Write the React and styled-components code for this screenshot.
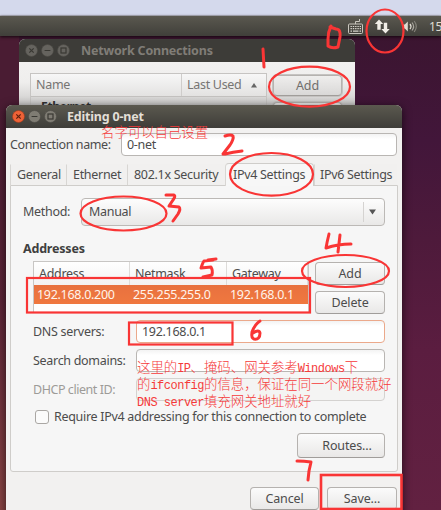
import React from "react";
import styled, { createGlobalStyle } from "styled-components";

const Global = createGlobalStyle`
  * { box-sizing: border-box; }
  html, body { margin: 0; padding: 0; overflow: hidden; }
  body { font-family: "Noto Sans", "Open Sans", sans-serif; font-size: 12.5px; color: #4c4c4c; letter-spacing: -0.3px; }
`;

const Desktop = styled.main`
  position: relative;
  width: 441px;
  height: 510px;
  overflow: hidden;
  background:
    linear-gradient(180deg, #4a1c33 0, #4a1c33 100px, #5c2437 300px, #8a4544 510px) 0 0 / 19px 100% no-repeat,
    linear-gradient(180deg, #3b1530 36px, #42163a 140px, #4e1a3b 240px, #5b1d40 350px, #622141 510px);
`;
const HostStrip = styled.div`
  height: 16px;
  background: #d4d9ec;
  border-bottom: 1px solid #b9bcc6;
`;
const Panel = styled.header`
  height: 20px;
  display: flex;
  align-items: center;
  padding-left: 348px;
  background: linear-gradient(#5a584f, #403f3a);
  box-shadow: 0 1px 3px #16060f;
  color: #dfdbd2;
  white-space: nowrap;
  svg { flex: none; }
`;
const Clock = styled.span`
  margin-left: 11px;
  font-size: 12px;
`;

const Window = styled.section`
  position: absolute;
  left: ${(p) => p.$x}px;
  top: ${(p) => p.$y}px;
  width: ${(p) => p.$w}px;
  height: ${(p) => p.$h}px;
  display: flex;
  flex-direction: column;
  border-radius: 6px 6px 0 0;
  overflow: hidden;
  background: #f2f1f0;
`;
const Shadow = styled.div`
  position: absolute;
  left: 6px;
  top: 105px;
  width: 396px;
  height: 420px;
  border-radius: 6px;
  box-shadow: 0 2px 10px rgba(0, 0, 0, 0.65);
`;
const TitleBar = styled.div`
  flex: none;
  height: 23px;
  display: flex;
  align-items: center;
  gap: 3px;
  padding-left: 6px;
  background: ${(p) => (p.$active ? "linear-gradient(#5b594f, #3e3d39)" : "#3d3c38")};
  color: ${(p) => (p.$active ? "#e3dfd7" : "#807d77")};
`;
const Title = styled.h1`
  margin: 0 0 0 ${(p) => p.$gap}px;
  font-size: 12.5px;
  line-height: 20px;
  font-weight: 700;
  letter-spacing: -0.2px;
  white-space: nowrap;
`;
const Label = styled.span`
  white-space: nowrap;
  line-height: 18px;
  letter-spacing: ${(p) => p.$ls || -0.3}px;
  width: ${(p) => (p.$w ? p.$w + "px" : "auto")};
  flex: none;
  color: ${(p) => (p.$dim ? "#9d9b98" : "inherit")};
`;

const ConnBody = styled.div`
  flex: 1;
  display: flex;
  gap: 6px;
  padding: 11px 12px 0 11px;
  background: linear-gradient(#f2f1f0 0, #efeeed 20px, #cdcccb 43px);
`;
const ConnList = styled.div`
  width: 237px;
  border: 1px solid #c6c4c2;
  border-bottom: 0;
  color: #777573;
`;
const ConnHead = styled.div`
  height: 23px;
  display: grid;
  grid-template-columns: 151px 1fr;
  background: linear-gradient(#f7f7f7, #e3e2e1);
  border-bottom: 1px solid #c3c1bf;
`;
const HeadCell = styled.div`
  display: flex;
  align-items: center;
  justify-content: space-between;
  padding: 0 ${(p) => p.$r || 0}px 0 5px;
  border-right: ${(p) => (p.$last ? 0 : 1)}px solid #cfcdcb;
`;
const ConnRow = styled.div`
  padding: 0 10px;
  height: 14px;
  color: #333;
  font-weight: 700;
  font-size: 12px;
  line-height: 20px;
`;
const ConnButtons = styled.div`
  display: flex;
  flex-direction: column;
  gap: 6px;
  padding-top: 2px;
`;

const Button = styled.button`
  flex: none;
  width: ${(p) => p.$w || 70}px;
  height: ${(p) => p.$h || 23}px;
  padding: 0 0 0 ${(p) => p.$shift || 0}px;
  border: 1px solid #b5b2af;
  border-bottom-color: #a09d9a;
  border-radius: 4px;
  background: ${(p) => (p.$dull ? "linear-gradient(#efeeed, #d9d8d7)" : "linear-gradient(#fbfbfb, #e9e8e7)")};
  box-shadow: ${(p) => (p.$dull ? "0 0 0 1px #c5c3c1" : "none")};
  font: inherit;
  letter-spacing: -0.15px;
  line-height: 18px;
  color: ${(p) => (p.$dull ? "#706e6c" : "#4c4c4c")};
`;
const Field = styled.div`
  flex: 1;
  height: 23px;
  display: flex;
  align-items: center;
  padding-left: 5px;
  border: 1px solid ${(p) => (p.$focus ? "#eba98b" : p.$off ? "#d4d2d0" : "#b9b6b3")};
  border-radius: 4px;
  background: ${(p) => (p.$off ? "#f4f4f3" : "linear-gradient(#f3f3f3, #fff 5px)")};
`;

const EditBody = styled.div`
  flex: 1;
  padding: 5px 4px 0;
`;
const NameRow = styled.div`
  display: flex;
  align-items: center;
  padding-right: 1px;
`;
const Tabs = styled.nav`
  display: flex;
  align-items: flex-end;
  height: 23px;
  margin-top: 6px;
`;
const Tab = styled.div`
  width: ${(p) => p.$w}px;
  height: ${(p) => (p.$active ? 23 : 21)}px;
  margin-bottom: ${(p) => (p.$active ? -1 : 0)}px;
  padding-left: ${(p) => p.$pad}px;
  display: flex;
  align-items: center;
  border: 1px solid ${(p) => (p.$active ? "#cfcdca" : "transparent")};
  border-left-color: #d8d6d3;
  border-bottom: 0;
  border-radius: ${(p) => (p.$active ? "4px 4px 0 0" : "0")};
  background: ${(p) => (p.$active ? "#f7f7f7" : "#f1f0ef")};
`;
const Page = styled.div`
  height: 287px;
  border: 1px solid #cfcdca;
  border-radius: 0 0 3px 3px;
  background: #f6f6f6;
  padding: 12px 12px 0 12px;
`;
const MethodRow = styled.div`
  display: flex;
  align-items: center;
`;
const Combo = styled.div`
  flex: 1;
  height: 28px;
  display: flex;
  align-items: center;
  justify-content: space-between;
  padding-left: 7px;
  border: 1px solid #bcb9b6;
  border-radius: 4px;
  background: linear-gradient(#fdfdfd, #e9e8e7);
`;
const ComboArrow = styled.div`
  width: 21px;
  height: 20px;
  display: flex;
  align-items: center;
  padding-left: 5px;
  border-left: 1px solid #d5d3d1;
`;
const SectionTitle = styled.h2`
  margin: 14px 0 0;
  height: 21px;
  font-size: 12.5px;
  line-height: 18px;
  letter-spacing: -0.2px;
  color: #3f3f3f;
`;
const AddressArea = styled.div`
  display: flex;
  gap: 6px;
  padding-left: 10px;
`;
const AddressTable = styled.div`
  flex: 1;
  height: 52px;
  border: 1px solid #c8c6c4;
  background: #fff;
`;
const AddressRow = styled.div`
  display: grid;
  grid-template-columns: 96px 97px 1fr;
  align-items: center;
  height: ${(p) => (p.$sel ? 19 : 23)}px;
  background: ${(p) => (p.$sel ? "linear-gradient(#e8713f, #f0783f)" : "linear-gradient(#fff, #f3f2f2)")};
  color: ${(p) => (p.$sel ? "#fff4ec" : "#4c4c4c")};
`;
const Cell = styled.div`
  height: 100%;
  display: flex;
  align-items: center;
  padding-left: ${(p) => (p.$head ? 5 : 3)}px;
  border-right: ${(p) => (p.$head ? 1 : 0)}px solid #dddbd9;
`;
const ButtonStack = styled.div`
  display: flex;
  flex-direction: column;
  gap: 6px;
  padding-top: 1px;
`;
const FormRows = styled.div`
  display: grid;
  row-gap: 6px;
  padding: 6px 0 0 10px;
`;
const FormRow = styled.div`
  display: flex;
  align-items: center;
`;
const CheckRow = styled.div`
  display: flex;
  align-items: center;
  gap: 5px;
  height: 18px;
  padding-left: 12px;
  margin-top: 7px;
`;
const CheckBox = styled.span`
  width: 14px;
  height: 14px;
  border: 1px solid #aaa7a4;
  border-radius: 3px;
  background: #fbfbfb;
`;
const RightRow = styled.div`
  display: flex;
  justify-content: flex-end;
  gap: 8px;
  margin-top: ${(p) => p.$top}px;
  padding-right: ${(p) => p.$r || 0}px;
`;

const Overlay = styled.svg`
  position: absolute;
  left: 0;
  top: 0;
  pointer-events: none;
`;
const Note = styled.div`
  position: absolute;
  left: ${(p) => p.$x}px;
  top: ${(p) => p.$y}px;
  white-space: pre;
  font-family: "Noto Sans CJK SC", sans-serif;
  font-size: 13.4px;
  line-height: 17px;
  letter-spacing: 0;
  font-weight: 300;
  color: #f53a3a;
`;
const NoteLine = styled.div`
  height: 17px;
`;
const Latin = styled.span`
  font-family: "Liberation Mono", monospace;
  font-size: 12px;
  letter-spacing: -0.5px;
  line-height: 1;
`;

const controlGlyphs = {
  close: <path d="M4.3 4.3l4.4 4.4M8.7 4.3l-4.4 4.4" />,
  min: <path d="M3.6 6.5h5.8" />,
  max: <rect x="4" y="4" width="5" height="5" />,
};
function Control({ kind, active }) {
  const hot = active && kind === "close";
  const fill = hot ? "#ee6237" : active ? "#7f7c73" : "#65635e";
  return (
    <svg width="13" height="13" viewBox="0 0 13 13">
      <circle cx="6.5" cy="6.5" r="6" fill={fill} stroke={hot ? "#a33b1d" : "#4c4a44"} strokeWidth=".6" />
      <g fill="none" stroke={hot ? "#60200e" : "#393833"} strokeWidth="1.2">{controlGlyphs[kind]}</g>
    </svg>
  );
}
function Controls({ active }) {
  return ["close", "min", "max"].map((k) => <Control key={k} kind={k} active={active} />);
}

function TrayIcons() {
  return (
    <svg width="70" height="20" viewBox="348 16 70 20" fill="none">
      <path d="M355.5 24v-2.5h4V19" stroke="#c9c6be" strokeWidth="1" />
      <rect x="348.500" y="24" width="14" height="9.500" rx="1" stroke="#c9c6be" />
      <path d="M350.500 26.500h10.500M350.500 28.700h10.500" stroke="#d8d5cd" strokeWidth="1.200" strokeDasharray="1.400 .9" />
      <path d="M350.500 31.200h1.500M353 31.200h5.500M359.500 31.200h1.500" stroke="#d8d5cd" strokeWidth="1.200" />
      <path d="M379 19.500l4.200 4.500h-2.500v5.800h-3.400V24h-2.500z" fill="#f1eee7" />
      <path d="M385.500 33.500l-4.200-4.500h2.500v-6.200h3.400V29h2.500z" fill="#f1eee7" />
      <path d="M403 24.500h1.800l3-3v10l-3-3H403z" fill="#dfdbd2" />
      <path d="M410 24q2 2.500 0 5" stroke="#dfdbd2" strokeWidth="1.300" />
      <path d="M412 22.500q3.200 4 0 8" stroke="#aaa79f" strokeWidth="1.200" />
      <path d="M414.200 21q4.200 5.500 0 11" stroke="#85837b" strokeWidth="1.200" />
    </svg>
  );
}

function Annotations() {
  return (
    <Overlay width="441" height="510" viewBox="0 0 441 510" fill="none" stroke="#f93535" strokeWidth="2.200" strokeLinecap="round" strokeLinejoin="round">
      <ellipse cx="385" cy="31" rx="18.500" ry="21.500" />
      <ellipse cx="309.500" cy="86.700" rx="40.500" ry="20" />
      <ellipse cx="271.500" cy="174.300" rx="41.500" ry="21.300" />
      <ellipse cx="123.500" cy="213.500" rx="43" ry="17" />
      <ellipse cx="345.500" cy="271" rx="43.500" ry="16" />
      <g strokeLinejoin="miter">
        <rect x="27" y="278" width="283" height="34.500" />
        <rect x="129" y="322.500" width="103.500" height="22" />
        <rect x="321" y="475" width="80.500" height="34" strokeWidth="2.600" />
      </g>
      <g strokeWidth="3">
        <path d="M331 26q-3 6-3 13v7q4 3 10 1l2-10q1-8-4-8l-6-2" />
        <path d="M263 49l1 18" />
        <path d="M225 136q6-2 8 0q1 3-3 9l-7 9h2q8-2 17-3" />
        <path d="M166 195h8q2 1-1 5l-4 6 10 1q2 2-1 7l-5 7" />
        <path d="M329 234q-2 8-3 14q12-4 25-4M340 235l-2 17" />
        <path d="M213 260l-9 1q-1 1-3 7l10-1q2 3 1 8l-9 2M208 260l8-1" />
        <path d="M260 321q-5 3-8 11q-1 6 2 7q6 1 6-6q-1-4-7 0" />
        <path d="M297 461q7 0 14 1l-2 9-1 9" />
      </g>
    </Overlay>
  );
}

export default function App() {
  return (
    <Desktop>
      <Global />
      <HostStrip />
      <Panel>
        <TrayIcons />
        <Clock>15</Clock>
      </Panel>

      <Window $x={19} $y={39} $w={336} $h={72}>
        <TitleBar>
          <Controls />
          <Title $gap={8}>Network Connections</Title>
        </TitleBar>
        <ConnBody>
          <ConnList>
            <ConnHead>
              <HeadCell><Label>Name</Label></HeadCell>
              <HeadCell $last $r={9}>
                <Label>Last Used</Label>
                <svg width="6" height="5"><path d="M0 4.500L3 0l3 4.500z" fill="#666" /></svg>
              </HeadCell>
            </ConnHead>
            <ConnRow>Ethernet</ConnRow>
          </ConnList>
          <ConnButtons>
            <Button $dull $w={69} $h={21}>Add</Button>
            <Button $dull $w={69} $h={21} />
          </ConnButtons>
        </ConnBody>
      </Window>

      <Shadow />
      <Window $x={6} $y={105} $w={396} $h={420}>
        <TitleBar $active>
          <Controls active />
          <Title $gap={7}>Editing 0-net</Title>
        </TitleBar>
        <EditBody>
          <NameRow>
            <Label $w={111} $ls={-0.4}>Connection name:</Label>
            <Field>0-net</Field>
          </NameRow>
          <Tabs>
            <Tab $w={56} $pad={6}><Label>General</Label></Tab>
            <Tab $w={61} $pad={6}><Label>Ethernet</Label></Tab>
            <Tab $w={98} $pad={6}><Label>802.1x Security</Label></Tab>
            <Tab $w={89} $pad={7} $active><Label>IPv4 Settings</Label></Tab>
            <Tab $w={83} $pad={5}><Label>IPv6 Settings</Label></Tab>
          </Tabs>
          <Page>
            <MethodRow>
              <Label $w={58}>Method:</Label>
              <Combo>
                <Label>Manual</Label>
                <ComboArrow>
                  <svg width="7" height="6"><path d="M0 .5h7L3.500 5.500z" fill="#555" /></svg>
                </ComboArrow>
              </Combo>
            </MethodRow>
            <SectionTitle>Addresses</SectionTitle>
            <AddressArea>
              <AddressTable>
                <AddressRow>
                  <Cell $head><Label>Address</Label></Cell>
                  <Cell $head><Label>Netmask</Label></Cell>
                  <Cell $head><Label>Gateway</Label></Cell>
                </AddressRow>
                <AddressRow $sel>
                  <Cell><Label>192.168.0.200</Label></Cell>
                  <Cell><Label>255.255.255.0</Label></Cell>
                  <Cell><Label>192.168.0.1</Label></Cell>
                </AddressRow>
              </AddressTable>
              <ButtonStack>
                <Button>Add</Button>
                <Button>Delete</Button>
              </ButtonStack>
            </AddressArea>
            <FormRows>
              <FormRow><Label $w={103}>DNS servers:</Label><Field $focus>192.168.0.1</Field></FormRow>
              <FormRow><Label $w={103}>Search domains:</Label><Field /></FormRow>
              <FormRow><Label $w={103} $ls={-0.45} $dim>DHCP client ID:</Label><Field $off /></FormRow>
            </FormRows>
            <CheckRow>
              <CheckBox />
              <Label>Require IPv4 addressing for this connection to complete</Label>
            </CheckRow>
            <RightRow $top={7}>
              <Button $w={88} $h={25} $shift={12}>Routes…</Button>
            </RightRow>
          </Page>
          <RightRow $top={15} $r={1}>
            <Button $w={69}>Cancel</Button>
            <Button $w={70}>Save...</Button>
          </RightRow>
        </EditBody>
      </Window>

      <Annotations />
      <Note $x={101} $y={123}>名字可以自己设置</Note>
      <Note $x={137} $y={358}>
        <NoteLine>这里的<Latin>IP</Latin>、掩码、网关参考<Latin>Windows</Latin>下</NoteLine>
        <NoteLine>的<Latin>ifconfig</Latin>的信息，保证在同一个网段就好</NoteLine>
        <NoteLine><Latin>DNS server</Latin>填充网关地址就好</NoteLine>
      </Note>
    </Desktop>
  );
}
